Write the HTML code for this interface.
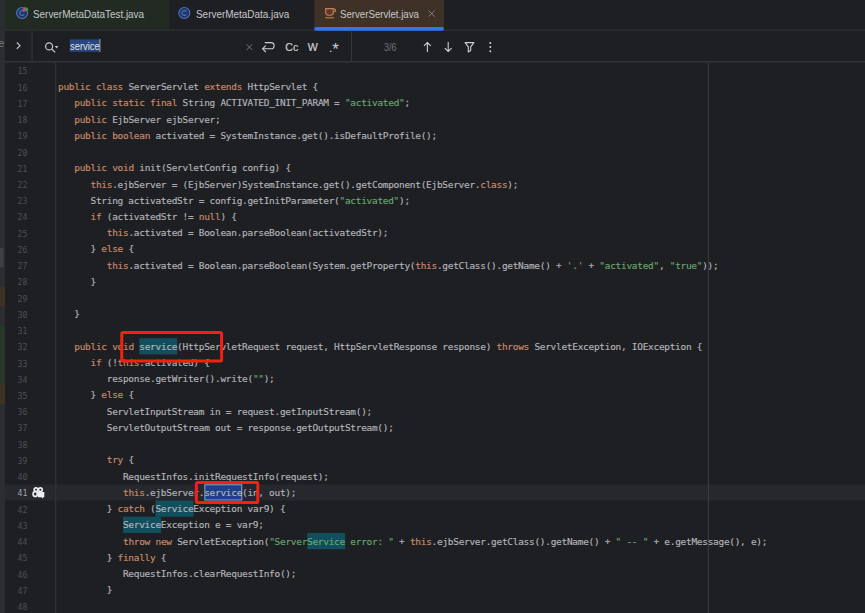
<!DOCTYPE html>
<html lang="en"><head><meta charset="utf-8"><title>ServerServlet.java</title>
<style>
html,body{margin:0;padding:0;background:#1e1f22;}
body{width:865px;height:613px;position:relative;overflow:hidden;font-family:"Liberation Sans",sans-serif;color:#bcbec4;}
div,span,svg{box-sizing:border-box;}
.abs{position:absolute;}
svg.layer{position:absolute;left:0;top:0;}
.t{position:absolute;top:6.6px;transform-origin:0 50%;font-size:11px;line-height:14px;color:#c6c8ce;white-space:nowrap;}
.tb{position:absolute;font-size:10.6px;line-height:14px;color:#ced0d6;white-space:nowrap;-webkit-text-stroke:0.2px currentColor;}
.ln{position:absolute;left:5px;margin-top:1.1px;width:22.6px;text-align:right;font-family:"DejaVu Sans Mono","Liberation Mono",monospace;font-size:8.2px;letter-spacing:0.07px;line-height:16.23px;height:16.23px;color:#4b5059;white-space:pre;}
.ln.cur{color:#a1a3ab;}
.cl{-webkit-text-stroke:0.15px currentColor;margin-top:0.6px;position:absolute;left:58.00px;font-family:"DejaVu Sans Mono","Liberation Mono",monospace;font-size:9.45px;letter-spacing:-0.2689px;line-height:16.23px;height:16.23px;color:#b3b5bb;white-space:pre;}
.k{color:#cb8b6b;}
.s{color:#68a771;}
</style></head>
<body>
<!-- background layer: panels, lines, highlights, icons -->
<svg class="layer" width="865" height="613" viewBox="0 0 865 613">
  <!-- left strip (cropped project panel) -->
  <rect x="0" y="0" width="5" height="613" fill="#2b2d30"/>
  <rect x="-3" y="248" width="6.6" height="19.5" rx="2" fill="#3e4044"/>
  <rect x="0" y="287" width="5" height="19.7" fill="#3d3223"/>
  <rect x="0" y="325.6" width="5" height="57.7" fill="#27382a"/>
  <rect x="0" y="383.3" width="5" height="20.7" fill="#3d3223"/>
  <!-- tabs -->
  <rect x="5" y="0" width="164.4" height="29.5" fill="#222b22"/>
  <rect x="314.3" y="0" width="129.7" height="29.5" fill="#3d3225"/>
  <rect x="5" y="29.5" width="860" height="1.2" fill="#303236"/>
  <rect x="314.3" y="27" width="129.7" height="3.7" rx="1.8" fill="#3574f0"/>
  <!-- search bar -->
  <rect x="5" y="61.2" width="860" height="1.2" fill="#383a3f"/>
  <rect x="31.5" y="30.7" width="1.2" height="30.6" fill="#34363a"/>
  <rect x="350.9" y="30.7" width="1.2" height="30.6" fill="#34363a"/>
  <rect x="69.7" y="39.4" width="30" height="12.4" fill="#2a467f"/>
  <rect x="99.4" y="39.1" width="1" height="12.9" fill="#a3a8b6"/>
  <!-- editor -->
  <rect x="5" y="484.28" width="860" height="16.23" fill="#26282e"/>
  <rect x="55.1" y="62.4" width="1.2" height="551" fill="#323438"/>
  <rect x="707.8" y="62.4" width="1.2" height="551" fill="#37393e"/>
    <rect x="139.30" y="338.21" width="37.94" height="16.23" fill="#124f5e"/>
  <rect x="204.84" y="484.78" width="36.94" height="15.23" fill="#1f3f8c" stroke="#92a7bd" stroke-width="1"/>
  <rect x="155.56" y="500.51" width="37.94" height="16.23" fill="#124f5e"/>
  <rect x="123.04" y="516.74" width="37.94" height="16.23" fill="#124f5e"/>
  <rect x="307.32" y="532.97" width="37.94" height="16.23" fill="#124f5e"/>

  <!-- tab 1 icon: test class -->
  <g transform="translate(15.5,6.7)">
    <circle cx="6.6" cy="6.3" r="5.5" fill="#263659" stroke="#4874d2" stroke-width="1.1"/>
    <path d="M8.6 4.9 A2.4 2.4 0 1 0 8.6 7.7" fill="none" stroke="#4874d2" stroke-width="1.1"/>
    <path d="M6.6 2.8 L9.9 0 L9.9 5.2 Z" fill="#c85757"/>
    <path d="M13.1 2.6 L10.1 0 L10.1 5.2 Z" fill="#4f9a55"/>
  </g>
  <!-- tab 2 icon: class -->
  <g transform="translate(177.7,6.7)">
    <circle cx="6.6" cy="6.3" r="5.5" fill="#263659" stroke="#4874d2" stroke-width="1.1"/>
    <path d="M8.6 4.9 A2.4 2.4 0 1 0 8.6 7.7" fill="none" stroke="#4874d2" stroke-width="1.1"/>
  </g>
  <!-- tab 3 icon: java cup -->
  <g transform="translate(324.3,7.4)">
    <path d="M1.4 1.2 H9 V5.2 A2.6 2.6 0 0 1 6.4 7.8 H4 A2.6 2.6 0 0 1 1.4 5.2 Z" fill="#5a3a2c" stroke="#c77d55" stroke-width="1.1"/>
    <path d="M9 1.7 H10 A1.3 1.3 0 0 1 10 4.3 H9" fill="none" stroke="#c77d55" stroke-width="1.1"/>
    <path d="M1 10.4 H9.6" stroke="#c77d55" stroke-width="1.1"/>
  </g>
  <!-- tab close -->
  <g transform="translate(427.6,9.6)"><path d="M1 1 L7 7 M7 1 L1 7" stroke="#868a91" stroke-width="0.9" fill="none"/></g>
  <!-- chevron -->
  <g transform="translate(13.2,39.7)"><path d="M3.6 2.8 L6.8 6 L3.6 9.2" fill="none" stroke="#c4c6cc" stroke-width="1.15"/></g>
  <!-- search icon -->
  <g transform="translate(43.4,40.4)">
    <circle cx="5.7" cy="6" r="3.5" fill="none" stroke="#c4c6cc" stroke-width="1.25"/>
    <path d="M8.2 8.6 L11.8 12" stroke="#c4c6cc" stroke-width="1.25"/>
    <path d="M11.4 5.7 H15 L13.2 8 Z" fill="#c4c6cc"/>
  </g>
  <!-- clear x -->
  <g transform="translate(245.4,43.2)"><path d="M1.2 1.2 L6.8 6.8 M6.8 1.2 L1.2 6.8" stroke="#7a7e85" stroke-width="0.9" fill="none"/></g>
  <!-- wrap icon -->
  <g transform="translate(261,40)">
    <path d="M3.8 2.6 H10 A3.1 3.1 0 0 1 10 8.8 H1.8" fill="none" stroke="#ced0d6" stroke-width="1.1"/>
    <path d="M4.8 5.6 L1.6 8.8 L4.8 12" fill="none" stroke="#ced0d6" stroke-width="1.1"/>
  </g>
  <!-- arrows, filter, more -->
  <g transform="translate(421.4,40.5)"><path d="M6 11.4 V2 M2.6 5.4 L6 2 L9.4 5.4" fill="none" stroke="#ced0d6" stroke-width="1.1"/></g>
  <g transform="translate(442.2,40.5)"><path d="M6 1.6 V11 M2.6 7.6 L6 11 L9.4 7.6" fill="none" stroke="#ced0d6" stroke-width="1.1"/></g>
  <g transform="translate(463.2,40.6)"><path d="M1.9 2 H10.7 L7.5 6.3 V10 L5.1 11.3 V6.3 Z" fill="none" stroke="#ced0d6" stroke-width="1.1" stroke-linejoin="round"/></g>
  <g transform="translate(488,41)"><circle cx="2.3" cy="1.9" r="1" fill="#ced0d6"/><circle cx="2.3" cy="6.1" r="1" fill="#ced0d6"/><circle cx="2.3" cy="10.3" r="1" fill="#ced0d6"/></g>
  <!-- gutter icon line 41 -->
  <g transform="translate(31.6,486.9)" fill="none" stroke="#eceef2">
    <circle cx="4.4" cy="2.8" r="1.85" stroke-width="1.6"/>
    <circle cx="8.8" cy="2.8" r="1.85" stroke-width="1.6"/>
    <ellipse cx="3.6" cy="7" rx="2.1" ry="2.5" stroke-width="1.7"/>
    <path d="M6.2 5.2 H12.7 V10.3 H11.6 L10.9 11.6 L9.9 10.3 H6.2 Z" fill="#eceef2" stroke="none"/>
  </g>
</svg>

<div class="abs" style="left:-1.4px;top:37.3px;font-size:10.4px;line-height:14px;color:#7a7d84;">e</div>

<!-- tab labels -->
<div class="t" style="left:32.5px;transform:scaleX(0.899)">ServerMetaDataTest.java</div>
<div class="t" style="left:195.7px;transform:scaleX(0.902)">ServerMetaData.java</div>
<div class="t" style="left:339.8px;transform:scaleX(0.878)">ServerServlet.java</div>

<!-- search bar text -->
<div class="tb" style="left:70px;top:38.8px;color:#dfe1e5;font-size:11px;transform-origin:0 50%;transform:scaleX(0.855);-webkit-text-stroke:0">service</div>
<div class="tb" style="left:285.3px;top:40.2px;">Cc</div>
<div class="tb" style="left:307.8px;top:40.2px;">W</div>
<div class="tb" style="left:329.3px;top:40.6px;">.</div><div class="tb" style="left:332.3px;top:41.2px;font-size:17px;line-height:17px;-webkit-text-stroke:0">*</div>
<div class="tb" style="left:384px;top:41.3px;color:#6f737a;font-size:10px;transform-origin:0 50%;transform:scaleX(0.9);-webkit-text-stroke:0">3/6</div>

<!-- editor text -->
<div class="ln" style="top:62.30px">15</div>
<div class="ln" style="top:78.53px">16</div>
<div class="ln" style="top:94.76px">17</div>
<div class="ln" style="top:110.99px">18</div>
<div class="ln" style="top:127.22px">19</div>
<div class="ln" style="top:143.45px">20</div>
<div class="ln" style="top:159.68px">21</div>
<div class="ln" style="top:175.91px">22</div>
<div class="ln" style="top:192.14px">23</div>
<div class="ln" style="top:208.37px">24</div>
<div class="ln" style="top:224.60px">25</div>
<div class="ln" style="top:240.83px">26</div>
<div class="ln" style="top:257.06px">27</div>
<div class="ln" style="top:273.29px">28</div>
<div class="ln" style="top:289.52px">29</div>
<div class="ln" style="top:305.75px">30</div>
<div class="ln" style="top:321.98px">31</div>
<div class="ln" style="top:338.21px">32</div>
<div class="ln" style="top:354.44px">33</div>
<div class="ln" style="top:370.67px">34</div>
<div class="ln" style="top:386.90px">35</div>
<div class="ln" style="top:403.13px">36</div>
<div class="ln" style="top:419.36px">37</div>
<div class="ln" style="top:435.59px">38</div>
<div class="ln" style="top:451.82px">39</div>
<div class="ln" style="top:468.05px">40</div>
<div class="ln cur" style="top:484.28px">41</div>
<div class="ln" style="top:500.51px">42</div>
<div class="ln" style="top:516.74px">43</div>
<div class="ln" style="top:532.97px">44</div>
<div class="ln" style="top:549.20px">45</div>
<div class="ln" style="top:565.43px">46</div>
<div class="ln" style="top:581.66px">47</div>
<div class="ln" style="top:597.89px">48</div>
<div class="cl" style="top:78.53px"><span class="k">public</span> <span class="k">class</span> ServerServlet <span class="k">extends</span> HttpServlet {</div>
<div class="cl" style="top:94.76px">   <span class="k">public</span> <span class="k">static</span> <span class="k">final</span> String ACTIVATED_INIT_PARAM = <span class="s">"activated"</span>;</div>
<div class="cl" style="top:110.99px">   <span class="k">public</span> EjbServer ejbServer;</div>
<div class="cl" style="top:127.22px">   <span class="k">public</span> <span class="k">boolean</span> activated = SystemInstance.get().isDefaultProfile();</div>
<div class="cl" style="top:159.68px">   <span class="k">public</span> <span class="k">void</span> init(ServletConfig config) {</div>
<div class="cl" style="top:175.91px">      <span class="k">this</span>.ejbServer = (EjbServer)SystemInstance.get().getComponent(EjbServer.<span class="k">class</span>);</div>
<div class="cl" style="top:192.14px">      String activatedStr = config.getInitParameter(<span class="s">"activated"</span>);</div>
<div class="cl" style="top:208.37px">      <span class="k">if</span> (activatedStr != <span class="k">null</span>) {</div>
<div class="cl" style="top:224.60px">         <span class="k">this</span>.activated = Boolean.parseBoolean(activatedStr);</div>
<div class="cl" style="top:240.83px">      } <span class="k">else</span> {</div>
<div class="cl" style="top:257.06px">         <span class="k">this</span>.activated = Boolean.parseBoolean(System.getProperty(<span class="k">this</span>.getClass().getName() + <span class="s">'.'</span> + <span class="s">"activated"</span>, <span class="s">"true"</span>));</div>
<div class="cl" style="top:273.29px">      }</div>
<div class="cl" style="top:305.75px">   }</div>
<div class="cl" style="top:338.21px">   <span class="k">public</span> <span class="k">void</span> service(HttpServletRequest request, HttpServletResponse response) <span class="k">throws</span> ServletException, IOException {</div>
<div class="cl" style="top:354.44px">      <span class="k">if</span> (!<span class="k">this</span>.activated) {</div>
<div class="cl" style="top:370.67px">         response.getWriter().write(<span class="s">""</span>);</div>
<div class="cl" style="top:386.90px">      } <span class="k">else</span> {</div>
<div class="cl" style="top:403.13px">         ServletInputStream in = request.getInputStream();</div>
<div class="cl" style="top:419.36px">         ServletOutputStream out = response.getOutputStream();</div>
<div class="cl" style="top:451.82px">         <span class="k">try</span> {</div>
<div class="cl" style="top:468.05px">            RequestInfos.initRequestInfo(request);</div>
<div class="cl" style="top:484.28px">            <span class="k">this</span>.ejbServer.service(in, out);</div>
<div class="cl" style="top:500.51px">         } <span class="k">catch</span> (ServiceException var9) {</div>
<div class="cl" style="top:516.74px">            ServiceException e = var9;</div>
<div class="cl" style="top:532.97px">            <span class="k">throw</span> <span class="k">new</span> ServletException(<span class="s">"ServerService error: "</span> + <span class="k">this</span>.ejbServer.getClass().getName() + <span class="s">" -- "</span> + e.getMessage(), e);</div>
<div class="cl" style="top:549.20px">         } <span class="k">finally</span> {</div>
<div class="cl" style="top:565.43px">            RequestInfos.clearRequestInfo();</div>
<div class="cl" style="top:581.66px">         }</div>

<!-- annotation boxes (drawn over the code) -->
<svg class="layer" width="865" height="613" viewBox="0 0 865 613">
  <rect x="121.75" y="332.5" width="99.85" height="28.4" rx="1.4" fill="none" stroke="#f5200f" stroke-width="3"/>
  <rect x="196.4" y="482.5" width="61.4" height="20.1" rx="1.4" fill="none" stroke="#f5200f" stroke-width="3"/>
</svg>
</body></html>
